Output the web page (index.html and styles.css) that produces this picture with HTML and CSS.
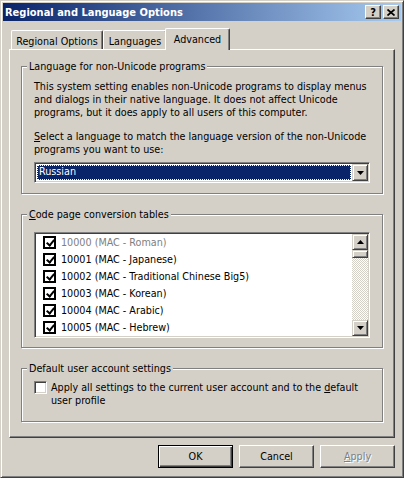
FILE: index.html
```html
<!DOCTYPE html>
<html lang="en">
<head>
    <meta charset="UTF-8">
    <title>Regional and Language Options</title>
    <link rel="stylesheet" href="styles.css">
</head>
<body>
    <div class="window">
        <div class="titlebar">
            <span class="title">Regional and Language Options</span>
            <div class="title-buttons">
                <span class="tbtn">?</span>
                <span class="tbtn">
                    <svg width="8" height="7" viewBox="0 0 8 7"><path d="M0.5 0.5 L7.5 6.5 M7.5 0.5 L0.5 6.5" stroke="#000" stroke-width="1.7" fill="none"/></svg>
                </span>
            </div>
        </div>
        <div class="content">
            <div class="tabs">
                <div class="tab tab-regional">Regional Options</div>
                <div class="tab tab-languages">Languages</div>
                <div class="tab active">Advanced</div>
            </div>
            <div class="panel">
                <div class="group group-lang">
                    <span class="group-label">Language for non-Unicode programs</span>
                    <p class="text">This system setting enables non-Unicode programs to display menus<br>and dialogs in their native language. It does not affect Unicode<br>programs, but it does apply to all users of this computer.</p>
                    <p class="text second"><u>S</u>elect a language to match the language version of the non-Unicode<br>programs you want to use:</p>
                    <div class="combo">
                        <div class="combo-value">Russian</div>
                        <div class="combo-button">
                            <svg width="7" height="4" viewBox="0 0 7 4"><polygon points="0,0 7,0 3.5,4" fill="#000"/></svg>
                        </div>
                    </div>
                </div>

                <div class="group group-codepage">
                    <span class="group-label"><u>C</u>ode page conversion tables</span>
                    <div class="listbox">
                        <div class="items">
                            <div class="item disabled"><span class="chk"></span>10000 (MAC - Roman)</div>
                            <div class="item"><span class="chk"></span>10001 (MAC - Japanese)</div>
                            <div class="item"><span class="chk"></span>10002 (MAC - Traditional Chinese Big5)</div>
                            <div class="item"><span class="chk"></span>10003 (MAC - Korean)</div>
                            <div class="item"><span class="chk"></span>10004 (MAC - Arabic)</div>
                            <div class="item"><span class="chk"></span>10005 (MAC - Hebrew)</div>
                        </div>
                        <div class="scrollbar">
                            <div class="sb-btn">
                                <svg width="7" height="4" viewBox="0 0 7 4"><polygon points="3.5,0 7,4 0,4" fill="#000"/></svg>
                            </div>
                            <div class="sb-thumb"></div>
                            <div class="sb-track"></div>
                            <div class="sb-btn">
                                <svg width="7" height="4" viewBox="0 0 7 4"><polygon points="0,0 7,0 3.5,4" fill="#000"/></svg>
                            </div>
                        </div>
                    </div>
                </div>

                <div class="group group-default">
                    <span class="group-label">Default user account settings</span>
                    <div class="check-row">
                        <span class="checkbox"></span>
                        <span>Apply all settings to the current user account and to the <u>d</u>efault<br>user profile</span>
                    </div>
                </div>
            </div>
            <div class="buttons">
                <button class="btn default">OK</button>
                <button class="btn">Cancel</button>
                <button class="btn disabled"><u>A</u>pply</button>
            </div>
        </div>
    </div>
</body>
</html>
```

FILE: styles.css
```css
* {
    box-sizing: border-box;
}
body {
    margin: 0;
    background: #d4d0c8;
    font-family: "DejaVu Sans Condensed", "DejaVu Sans", sans-serif;
    font-stretch: condensed;
    font-size: 10.7px;
    line-height: 13px;
    color: #000;
}
.window {
    width: 404px;
    height: 478px;
    padding: 2px;
    border: 1px solid;
    border-color: #d4d0c8 #404040 #404040 #d4d0c8;
    box-shadow: inset 1px 1px #fff, inset -1px -1px #808080;
    background: #d4d0c8;
}
.titlebar {
    height: 18px;
    display: flex;
    align-items: center;
    justify-content: space-between;
    padding: 0 2px 0 2px;
    background: linear-gradient(to right, #0a246a, #a6caf0);
}
.title {
    color: #fff;
    font-weight: bold;
    font-size: 11px;
}
.title-buttons {
    display: flex;
    gap: 2px;
}
.tbtn {
    width: 16px;
    height: 14px;
    display: flex;
    align-items: center;
    justify-content: center;
    background: #d4d0c8;
    border: 1px solid;
    border-color: #fff #404040 #404040 #fff;
    box-shadow: inset -1px -1px #808080;
    font-weight: bold;
    font-size: 11px;
}
.content {
    padding: 7px 6px 0;
}
.tabs {
    display: flex;
    align-items: flex-end;
    height: 21px;
    padding-left: 2px;
    position: relative;
    z-index: 1;
}
.tab {
    height: 19px;
    padding-top: 4px;
    text-align: center;
    white-space: nowrap;
    background: #d4d0c8;
    border-top: 1px solid #fff;
    border-left: 1px solid #fff;
    border-right: 1px solid #404040;
    box-shadow: inset -1px 0 #808080;
    border-radius: 2px 2px 0 0;
}
.tab-regional {
    width: 92px;
}
.tab-languages {
    width: 64px;
}
.tab.active {
    width: 65px;
    height: 22px;
    margin-left: -2px;
    margin-bottom: -1px;
}
.panel {
    height: 389px;
    border: 1px solid;
    border-color: #fff #404040 #404040 #fff;
    box-shadow: inset -1px -1px #808080;
    padding: 16px 11px 0 11px;
}
.group {
    position: relative;
    border: 1px solid #808080;
    box-shadow: 1px 1px #fff, inset 1px 1px #fff;
}
.group-label {
    position: absolute;
    top: -7px;
    left: 5px;
    padding: 0 2px;
    background: #d4d0c8;
    white-space: nowrap;
}
.group-lang {
    padding: 13px 12px 10px 12px;
}
.group-codepage {
    margin-top: 20px;
    padding: 17px 12px 9px 12px;
}
.group-default {
    margin-top: 20px;
    padding: 12px 12px 14px 12px;
}
.text {
    margin: 0;
    white-space: nowrap;
}
.text.second {
    margin-top: 11px;
}
.combo {
    margin-top: 6px;
    height: 21px;
    display: flex;
    background: #fff;
    border: 1px solid;
    border-color: #808080 #fff #fff #808080;
    box-shadow: inset 1px 1px #404040, inset -1px -1px #d4d0c8;
    padding: 1px;
}
.combo-value {
    flex: 1;
    margin: 1px;
    padding-left: 1px;
    background: #0a246a;
    color: #fff;
    border: 1px dotted #fff;
    line-height: 11px;
}
.combo-button,
.sb-btn {
    width: 16px;
    display: flex;
    align-items: center;
    justify-content: center;
    background: #d4d0c8;
    border: 1px solid;
    border-color: #d4d0c8 #404040 #404040 #d4d0c8;
    box-shadow: inset 1px 1px #fff, inset -1px -1px #808080;
}
.listbox {
    height: 106px;
    display: flex;
    background: #fff;
    border: 1px solid;
    border-color: #808080 #fff #fff #808080;
    box-shadow: inset 1px 1px #404040, inset -1px -1px #d4d0c8;
    padding: 1px;
}
.items {
    flex: 1;
    overflow: hidden;
}
.item {
    height: 17px;
    display: flex;
    align-items: center;
    gap: 5px;
    padding-left: 7px;
    white-space: nowrap;
}
.item.disabled {
    color: #808080;
}
.chk {
    position: relative;
    width: 13px;
    height: 13px;
    flex: none;
    border: 2px solid #000;
    background: #fff;
}
.chk::after {
    content: "";
    position: absolute;
    left: 3px;
    top: 0;
    width: 3px;
    height: 6px;
    border: solid #000;
    border-width: 0 2px 2px 0;
    transform: rotate(40deg);
}
.scrollbar {
    width: 16px;
    display: flex;
    flex-direction: column;
}
.sb-btn {
    height: 16px;
}
.sb-thumb {
    height: 8px;
    background: #d4d0c8;
    border: 1px solid;
    border-color: #d4d0c8 #404040 #404040 #d4d0c8;
    box-shadow: inset 1px 1px #fff, inset -1px -1px #808080;
}
.sb-track {
    flex: 1;
    background-color: #d4d0c8;
    background-image: conic-gradient(#fff 25%, #d4d0c8 0 50%, #fff 0 75%, #d4d0c8 0);
    background-size: 2px 2px;
}
.check-row {
    display: flex;
    gap: 4px;
    white-space: nowrap;
}
.checkbox {
    width: 13px;
    height: 13px;
    flex: none;
    background: #fff;
    border: 1px solid;
    border-color: #808080 #fff #fff #808080;
    box-shadow: inset 1px 1px #404040, inset -1px -1px #d4d0c8;
}
.buttons {
    display: flex;
    justify-content: flex-end;
    gap: 6px;
    margin-top: 7px;
}
.btn {
    width: 75px;
    height: 23px;
    padding: 0;
    font: inherit;
    color: #000;
    background: #d4d0c8;
    border: 1px solid;
    border-color: #fff #404040 #404040 #fff;
    box-shadow: inset -1px -1px #808080;
}
.btn.default {
    border-color: #000;
    box-shadow: inset 1px 1px #fff, inset -1px -1px #404040, inset -2px -2px #808080;
}
.btn.disabled {
    color: #808080;
    text-shadow: 1px 1px 0 #fff;
}
```
